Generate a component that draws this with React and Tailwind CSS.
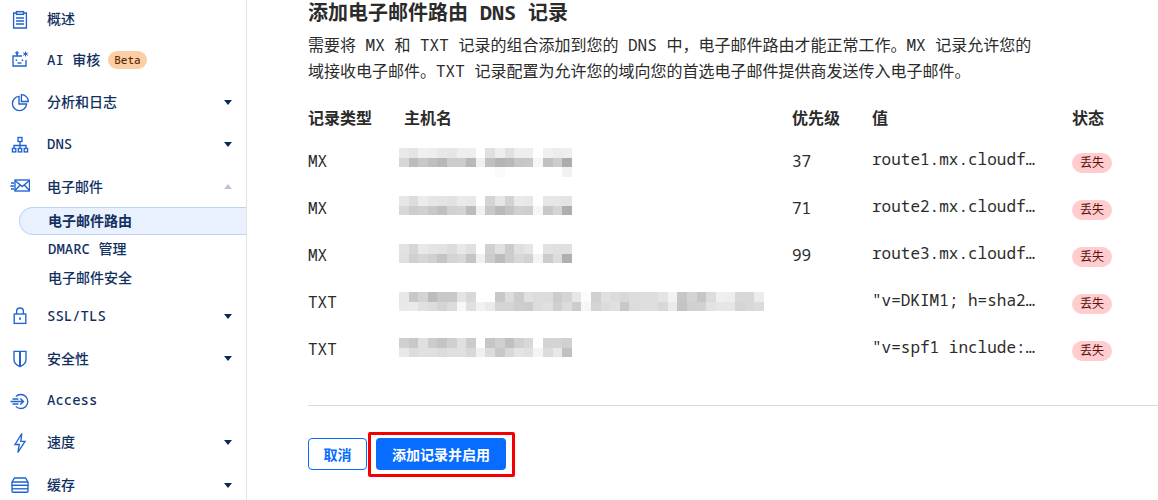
import React from 'react';

const font = "font-['Noto_Sans_Mono','Noto_Sans_CJK_SC',monospace]";

function Icon({ children }) {
  return (
    <svg width="20" height="20" viewBox="0 0 20 20" fill="none" stroke="#1f62d0" strokeWidth="1.35" className="shrink-0">
      {children}
    </svg>
  );
}

const icons = {
  overview: (
    <Icon>
      <path d="M6.5 3H3.6v15h12.8V3h-2.9" />
      <rect x="6.5" y="1.6" width="7" height="2.8" fill="#dbe7fb" />
      <path d="M6 8h8M6 11h8M6 14h8" />
    </Icon>
  ),
  robot: (
    <Icon>
      <path d="M12 6H3v10h13v-6" />
      <path d="M7 6V3.5" />
      <circle cx="7" cy="2.8" r="1" />
      <path d="M15.5 1.5v5M13.2 2.8l4.6 2.5M17.8 2.8l-4.6 2.5" strokeWidth="1" />
      <path d="M6.4 9.5v1.4M12.4 9.5v1.4" strokeWidth="1.5" />
      <path d="M7.5 13h4" />
    </Icon>
  ),
  pie: (
    <Icon>
      <path d="M9 3.4a7.1 7.1 0 1 0 7.6 7.6H9z" />
      <path d="M11.4 1.6a6.9 6.9 0 0 1 6.9 6.9h-6.9z" />
    </Icon>
  ),
  network: (
    <Icon>
      <rect x="8" y="2.5" width="4" height="4" />
      <path d="M10 6.5v7M4 13.5v-3h12v3" />
      <rect x="2.4" y="13.5" width="3.4" height="3.4" />
      <rect x="8.3" y="13.5" width="3.4" height="3.4" />
      <rect x="14.2" y="13.5" width="3.4" height="3.4" />
    </Icon>
  ),
  mail: (
    <Icon>
      <rect x="5" y="4" width="14.5" height="11" />
      <path d="M5 4.5l7.2 6 7.3-6M5 14.5l5-5.2M19.5 14.5l-5-5.2" />
      <path d="M1 7h3M0.4 10h3.6M1 13h3" />
    </Icon>
  ),
  lock: (
    <Icon>
      <rect x="4.2" y="8" width="11.6" height="9.4" />
      <path d="M6.6 8V5.4a3.4 3.4 0 0 1 6.8 0V8" />
      <path d="M10 11.4v2.4" strokeWidth="1.8" />
    </Icon>
  ),
  shield: (
    <Icon>
      <path d="M4 2.4h12v8.4c0 3.2-2.8 5.4-6 6.8-3.2-1.4-6-3.6-6-6.8z" />
      <path d="M10 2.4v15" strokeWidth="2" />
    </Icon>
  ),
  access: (
    <Icon>
      <path d="M5.8 5.6a7 7 0 1 1 0 9.8" />
      <path d="M0.5 10.5h13M10.3 7.4l3.2 3.1-3.2 3.1M2.5 8h6M2.5 13h6" />
    </Icon>
  ),
  bolt: (
    <Icon>
      <path d="M11.8 0.5L5 11.5h4.3L7.8 19.5l7.2-11.2h-4.2z" />
    </Icon>
  ),
  cache: (
    <Icon>
      <path d="M4.5 3h11l2.5 4v3.4H2V7zM2 7h16" />
      <rect x="2" y="10.4" width="16" height="6.8" rx="1" />
      <path d="M2 13.8h16" />
    </Icon>
  ),
};

function Caret({ up }) {
  return (
    <svg width="8" height="5" viewBox="0 0 8 5" className="ml-auto mr-[14px] shrink-0">
      {up ? <path d="M0 5L4 0l4 5z" fill="#b9c5d6" /> : <path d="M0 0h8L4 5z" fill="#0b2a5b" />}
    </svg>
  );
}

function NavRow({ icon, label, caret, up, h, labelClass = 'mb-[2px]', badge }) {
  return (
    <div className={`flex items-center pl-[10px] gap-[17px] text-[14px] font-medium text-[#12305f] ${h}`}>
      {icons[icon]}
      <span className={labelClass}>{label}</span>
      {badge && (
        <span className="-ml-[9px] flex h-[18px] items-center rounded-full bg-[#fbcfa5] px-[6px] text-[11px] text-[#5b2c06]">
          {badge}
        </span>
      )}
      {caret && <Caret up={up} />}
    </div>
  );
}

function Sidebar() {
  return (
    <aside className="w-[247px] shrink-0 border-r border-[#e3e3e3]">
      <NavRow icon="overview" label="概述" h="h-[39px]" />
      <NavRow icon="robot" label="AI 审核" badge="Beta" h="h-[42px]" />
      <NavRow icon="pie" label="分析和日志" caret h="h-[43px]" />
      <NavRow icon="network" label="DNS" caret h="h-[41px]" />
      <NavRow icon="mail" label="电子邮件" caret up h="h-[42px]" labelClass="mb-0" />
      <div className="pb-[3px] pl-[19px] text-[14px] font-medium text-[#12305f]">
        <div className="flex h-[28px] items-center rounded-l-full border border-r-0 border-[#bcd4f8] bg-[#e8f1fd] pb-[2px] pl-[28px] font-bold">
          电子邮件路由
        </div>
        <div className="flex h-[29px] items-center pb-[2px] pl-[29px]">DMARC 管理</div>
        <div className="flex h-[28px] items-center pb-[2px] pl-[29px]">电子邮件安全</div>
      </div>
      <NavRow icon="lock" label="SSL/TLS" caret h="h-[42px]" />
      <NavRow icon="shield" label="安全性" caret h="h-[43px]" labelClass="mb-0" />
      <NavRow icon="access" label="Access" h="h-[41px]" />
      <NavRow icon="bolt" label="速度" caret h="h-[43px]" />
      <NavRow icon="cache" label="缓存" caret h="h-[42px]" />
    </aside>
  );
}

// grey levels of the blurred host names, read off the picture
const route1Cells = [
  ['e8', 'e4', 'f0', 'ee', 'e8', 'e6', 'ee', 'ee', 'ff', 'e0', 'ee', 'e0', 'ee', 'ee', 'ff', 'f0', 'ec', 'ee'],
  ['d6', 'bc', 'c8', 'c0', 'b8', 'cc', 'cc', 'b8', 'f0', 'c0', 'b4', 'b8', 'c6', 'c8', 'f6', 'c0', 'cc', 'ac'],
  ['ff', 'ff', 'ff', 'ff', 'ff', 'ff', 'ff', 'ff', 'ff', 'ff', 'fa', 'ff', 'ff', 'ff', 'ff', 'ff', 'ff', 'f2'],
];
const route2Cells = [
  ['e6', 'dc', 'ec', 'e6', 'e4', 'e2', 'ea', 'e8', 'ff', 'd4', 'e6', 'd2', 'ea', 'e8', 'ff', 'e6', 'e6', 'e4'],
  ['d8', 'cc', 'd0', 'c8', 'c0', 'd2', 'd4', 'bc', 'f0', 'c8', 'ba', 'c4', 'd0', 'ce', 'f6', 'c8', 'd4', 'ae'],
];
const route3Cells = [
  ['e2', 'd6', 'e8', 'e4', 'e2', 'dc', 'e8', 'e0', 'ff', 'd0', 'e0', 'cc', 'e0', 'e6', 'ff', 'e2', 'e0', 'e0'],
  ['e0', 'd0', 'd6', 'd0', 'c4', 'd4', 'd8', 'c4', 'f0', 'cc', 'bc', 'cc', 'd8', 'd2', 'f4', 'cc', 'dc', 'b0'],
];
const dkimCells = [
  ['e8', 'c8', 'd4', 'bc', 'c8', 'c8', 'e4', 'd8', 'ff', 'ff', 'c8', 'dc', 'cc', 'e0', 'dc', 'dc', 'cc', 'd4', 'e6', 'fc', 'd0', 'e0', 'dc', 'd8', 'dc', 'de', 'de', 'e4', 'f2', 'c6', 'd4', 'c6', 'dc', 'f0', 'ee', 'd8', 'd8', 'ec'],
  ['e8', 'ea', 'e0', 'dc', 'd4', 'dc', 'f8', 'e0', 'f2', 'ea', 'd4', 'd4', 'ce', 'cc', 'dc', 'e0', 'd0', 'dc', 'cc', 'f6', 'd4', 'dc', 'e0', 'c8', 'dc', 'de', 'de', 'd8', 'ea', 'c4', 'd0', 'd2', 'e2', 'e6', 'e6', 'd4', 'd8', 'dc'],
];
const spfCells = [
  ['d0', 'c8', 'e0', 'cc', 'c4', 'd0', 'e0', 'cc', 'ff', 'c6', 'd0', 'c0', 'd0', 'd8', 'ff', 'd4', 'd4', 'd0'],
  ['e8', 'dc', 'e0', 'e0', 'dc', 'e0', 'e0', 'd8', 'f0', 'dc', 'c8', 'd8', 'e4', 'e0', 'f4', 'dc', 'e8', 'c0'],
];

function Mosaic({ cells }) {
  const cols = cells[0].length;
  const size = 9.6;
  return (
    <svg width={cols * size} height={cells.length * size} shapeRendering="crispEdges" className="block">
      {cells.map((row, y) =>
        row.map((c, x) => (
          <rect key={x} x={x * size} y={y * size} width={size + 0.5} height={size + 0.5} fill={`#${c}${c}${c}`} />
        )),
      )}
    </svg>
  );
}

const records = [
  { type: 'MX', cells: route1Cells, offset: 'mt-[11px]', priority: '37', value: 'route1.mx.cloudf…' },
  { type: 'MX', cells: route2Cells, offset: 'mt-[12px]', priority: '71', value: 'route2.mx.cloudf…' },
  { type: 'MX', cells: route3Cells, offset: 'mt-[13px]', priority: '99', value: 'route3.mx.cloudf…' },
  { type: 'TXT', cells: dkimCells, offset: 'mt-[14px]', priority: '', value: '"v=DKIM1; h=sha2…' },
  { type: 'TXT', cells: spfCells, offset: 'mt-[13px]', priority: '', value: '"v=spf1 include:…' },
];

const columns = 'grid grid-cols-[96px_388px_80px_200px_1fr] items-center';

function App() {
  return (
    <div className={`flex h-[500px] w-[1158px] overflow-hidden bg-white ${font}`}>
      <Sidebar />
      <main className="flex-1 pl-[61px] text-[16px] text-[#2b2b2b]">
        <h2 className="flex h-[26px] items-center text-[20px] font-bold">添加电子邮件路由 DNS 记录</h2>
        <p className="mt-[6px] w-[730px] leading-[26px]">
          需要将 MX 和 TXT 记录的组合添加到您的 DNS 中，电子邮件路由才能正常工作。MX 记录允许您的域接收电子邮件。TXT
          记录配置为允许您的域向您的首选电子邮件提供商发送传入电子邮件。
        </p>

        <div className={`${columns} mt-[21px] h-[26px] font-bold`}>
          <span>记录类型</span>
          <span>主机名</span>
          <span>优先级</span>
          <span>值</span>
          <span>状态</span>
        </div>
        <div className="mt-[6px]">
          {records.map((r) => (
            <div key={r.value} className={`${columns} h-[47px]`}>
              <span>{r.type}</span>
              <div className={`-ml-[5px] self-start ${r.offset}`}>
                <Mosaic cells={r.cells} />
              </div>
              <span>{r.priority}</span>
              <span className="mb-[4px] truncate">{r.value}</span>
              <span className="mt-[4px] flex h-[20px] w-[40px] items-center justify-center rounded-full bg-[#ffcdcd] text-[12px] text-[#5c1010]">
                丢失
              </span>
            </div>
          ))}
        </div>

        <div className="mt-[33px] border-t border-[#d9d9d9]" />

        <div className="mt-[32px] flex gap-[9px] text-[14px] font-bold">
          <button className="h-[32px] w-[59px] rounded-[4px] border border-[#086dff] text-[#086dff]">取消</button>
          <button className="relative h-[32px] w-[130px] rounded-[4px] bg-[#086dff] text-white">
            添加记录并启用
            <span className="absolute -bottom-[7px] -left-[8px] -right-[9px] -top-[6px] rounded-[2px] border-[3px] border-[#f40000]" />
          </button>
        </div>
      </main>
    </div>
  );
}

export default App;
